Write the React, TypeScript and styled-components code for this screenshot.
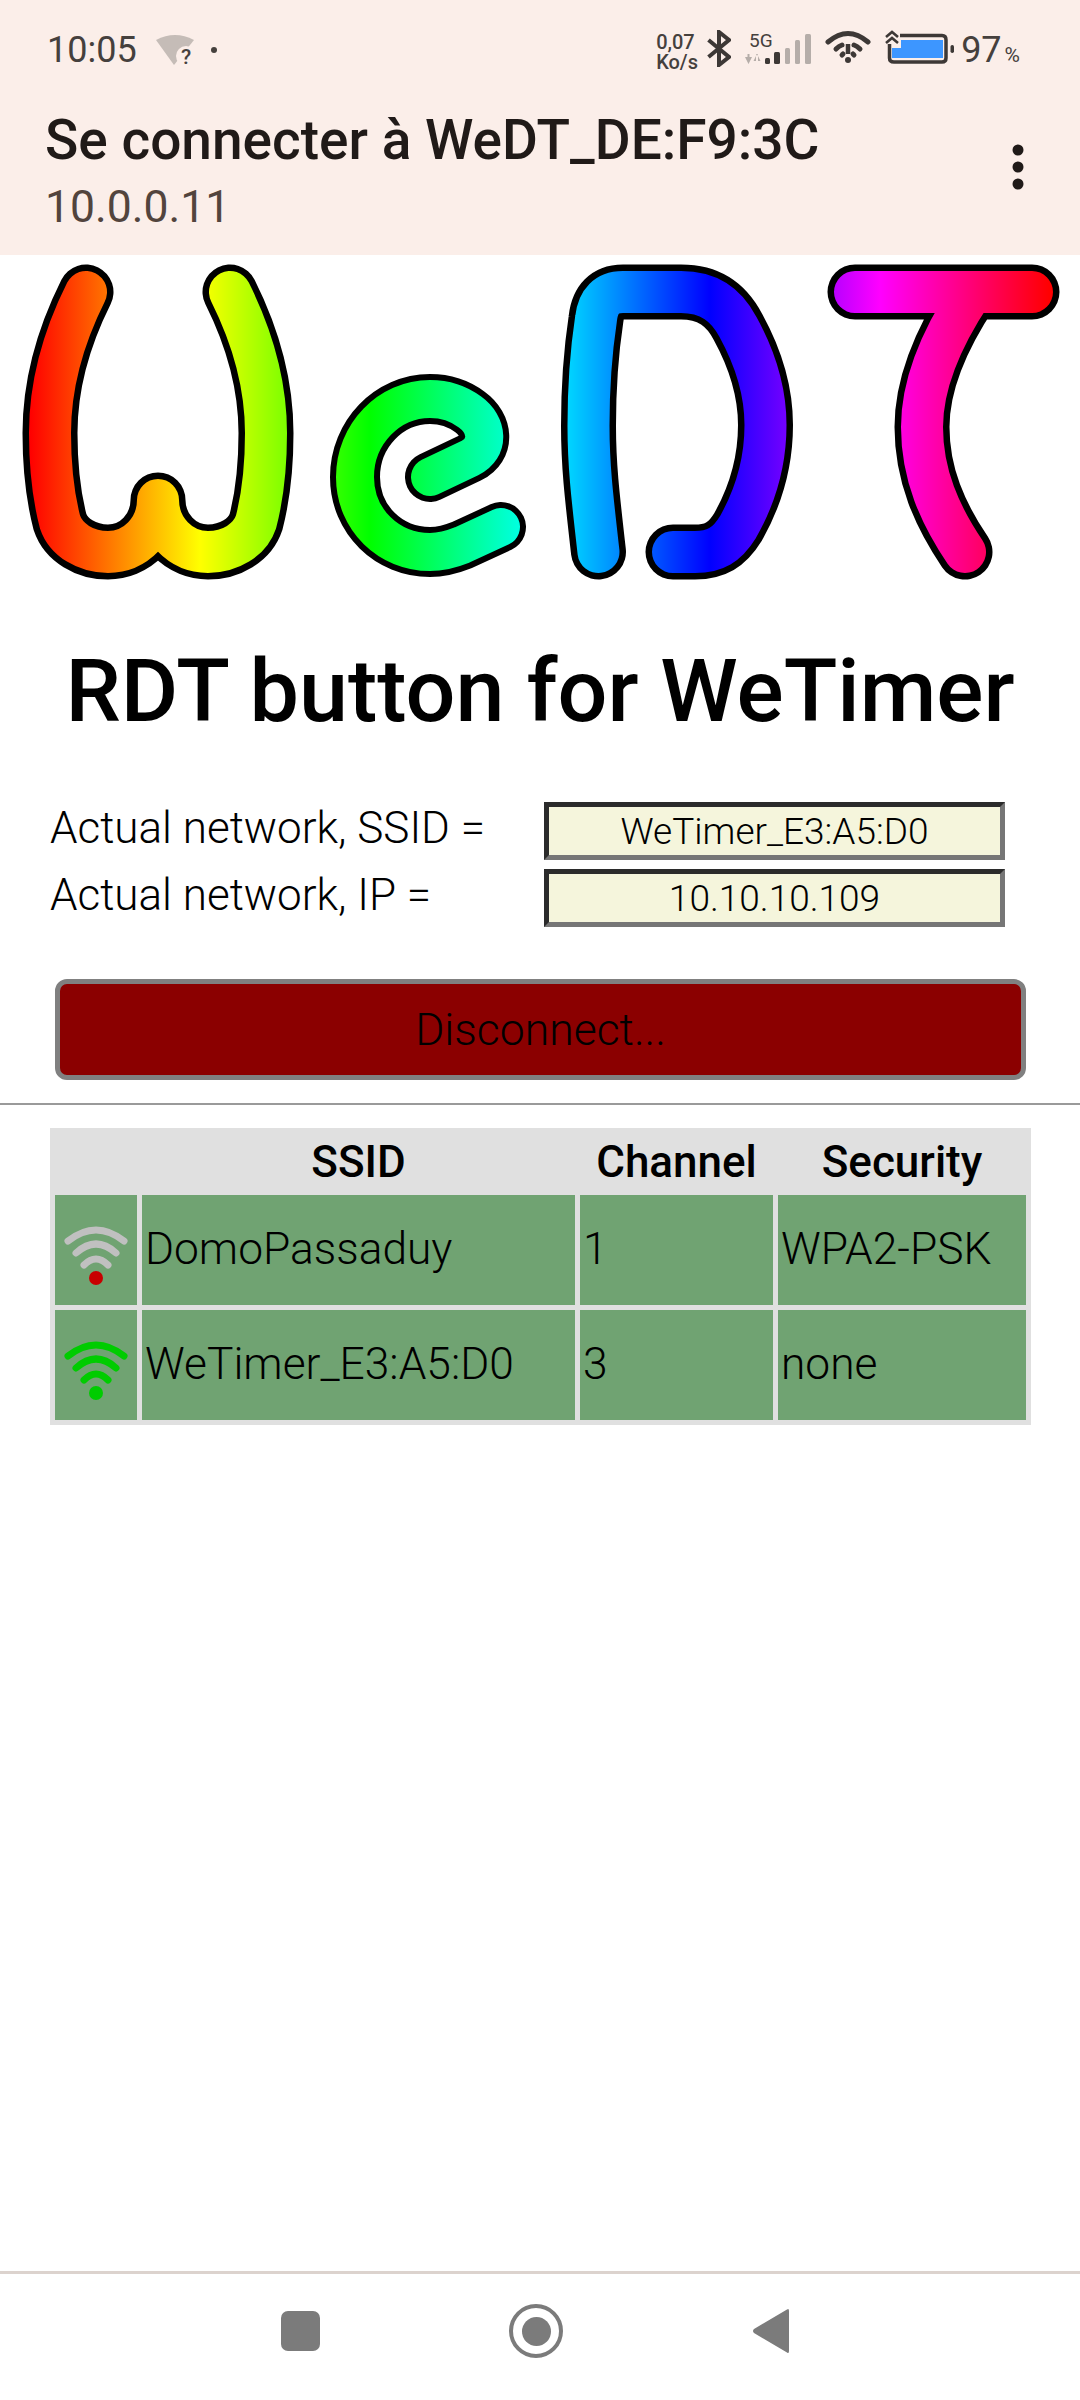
import React from 'react';
import styled, { createGlobalStyle } from 'styled-components';

const GlobalStyle = createGlobalStyle`
  html, body {
    margin: 0;
    padding: 0;
    background: #fff;
    font-family: Roboto, "Liberation Sans", sans-serif;
  }
`;

const Page = styled.div`
  display: flex;
  flex-direction: column;
  width: 1080px;
  height: 2400px;
  overflow: hidden;
`;

const AppHeader = styled.header`
  height: 255px;
  flex: none;
  background: #fbeee9;
`;

const StatusBar = styled.div`
  display: flex;
  align-items: center;
  height: 100px;
  padding: 0 60px 0 47px;
  color: #45403d;
  box-sizing: border-box;
`;

const Time = styled.span`
  font-size: 36px;
  line-height: 44px;
  margin-right: 19px;
`;

const NoticeDot = styled.span`
  width: 6px;
  height: 6px;
  border-radius: 50%;
  background: #45403d;
  margin-left: 17px;
`;

const StatusIcons = styled.div`
  display: flex;
  align-items: flex-start;
  gap: 13px;
  margin-left: auto;
  height: 40px;
`;

const Speed = styled.div`
  width: 38px;
  padding-top: 2px;
  font-size: 20px;
  line-height: 20px;
  font-weight: 500;
  white-space: nowrap;
`;

const Level = styled.div`
  margin-left: -6px;
  font-size: 36px;
  line-height: 40px;
  white-space: nowrap;
  & small {
    font-size: 21px;
    margin-left: 3px;
  }
`;

const TitleRow = styled.div`
  display: flex;
  align-items: flex-start;
  justify-content: space-between;
  padding: 8px 49px 0 45px;
`;

const Title = styled.h2`
  margin: 0;
  font-size: 55px;
  line-height: 64px;
  font-weight: 500;
  color: #201a18;
`;

const Subtitle = styled.div`
  font-size: 44.5px;
  line-height: 52px;
  margin-top: 9px;
  color: #52443d;
`;

const Kebab = styled.svg`
  width: 26px;
  height: 56px;
  margin-top: 34px;
`;

const Logo = styled.svg`
  display: block;
  flex: none;
  width: 1080px;
  height: 340px;
`;

const Heading = styled.h1`
  margin: 0;
  padding: 46px 0 0;
  height: 156px;
  box-sizing: border-box;
  text-align: center;
  font-size: 88px;
  line-height: 100px;
  font-weight: 500;
  color: #000;
`;

const NetworkInfo = styled.div`
  display: grid;
  grid-template-columns: 494px 461px;
  grid-row-gap: 9px;
  padding: 51px 0 0 50px;
  align-items: start;
`;

const InfoLabel = styled.label`
  font-size: 44px;
  line-height: 52px;
  font-weight: 300;
  color: #000;
  white-space: nowrap;
`;

const InfoValue = styled.input`
  width: 461px;
  height: 58px;
  box-sizing: border-box;
  border-width: 5px;
  border-style: solid;
  border-color: #2b2b2b #767676 #767676 #2b2b2b;
  padding: 0;
  background: #f5f5dc;
  text-align: center;
  font-family: inherit;
  font-size: 37px;
  font-weight: 300;
  color: #000;
  outline: none;
`;

const DisconnectButton = styled.button`
  display: block;
  width: 971px;
  height: 101px;
  margin: 52px 0 0 55px;
  box-sizing: border-box;
  border: 5px solid #808080;
  border-radius: 12px;
  background: #8b0000;
  font-family: inherit;
  font-size: 44.5px;
  font-weight: 300;
  color: #000;
`;

const Rule = styled.hr`
  margin: 23px 0 0;
  border: 0;
  height: 2px;
  background: #9a9a9a;
`;

const NetworkTable = styled.table`
  width: 981px;
  margin: 23px 0 0 50px;
  table-layout: fixed;
  border-collapse: separate;
  border-spacing: 5px;
  background: #e0e0e0;
  & th {
    height: 57px;
    padding: 0;
    font-size: 44px;
    font-weight: 500;
    color: #000;
    text-align: center;
  }
`;

const Cell = styled.td`
  height: 110px;
  padding: 0 0 3px 3px;
  box-sizing: border-box;
  background: #70a372;
  font-size: 44.3px;
  font-weight: 300;
  color: #000;
  white-space: nowrap;
`;

const IconCell = styled.td`
  height: 110px;
  padding: 0;
  background: #70a372;
  text-align: center;
  line-height: 0;
`;

const Spacer = styled.div`
  flex: 1;
`;

const NavBar = styled.nav`
  display: flex;
  align-items: center;
  height: 129px;
  flex: none;
  box-sizing: border-box;
  border-top: 3px solid #dcd3ce;
  padding: 0 0 12px 281px;
`;

const RecentsKey = styled.span`
  width: 39px;
  height: 40px;
  border-radius: 7px;
  background: #7b7b7b;
`;

const HomeKey = styled.span`
  display: flex;
  align-items: center;
  justify-content: center;
  width: 54px;
  height: 54px;
  margin-left: 189px;
  box-sizing: border-box;
  border: 4px solid #7b7b7b;
  border-radius: 50%;
  &::after {
    content: '';
    width: 29px;
    height: 29px;
    border-radius: 50%;
    background: #7b7b7b;
  }
`;

const BackKey = styled.svg`
  width: 37px;
  height: 46px;
  margin-left: 189px;
`;

const WifiQuestion = () => (
  <svg width="38" height="31" viewBox="0 0 38 31">
    <path d="M0 5 Q19 -5 38 5 L18 30 Z" fill="#c5bcb7" />
    <circle cx="30" cy="21" r="10" fill="#fbeee9" />
    <text x="30" y="29" fontFamily="Roboto" fontSize="21" fontWeight="500" textAnchor="middle" fill="#45403d">?</text>
  </svg>
);

const Bluetooth = () => (
  <svg width="24" height="37" viewBox="0 0 24 37">
    <path d="M1.500 10 L22 27 L12 35 L12 2 L22 10 L1.500 27" fill="none" stroke="#3d3836" strokeWidth="4" />
  </svg>
);

const Signal = () => (
  <svg width="68" height="40" viewBox="0 0 68 40">
    <text x="5" y="17" fontFamily="Roboto" fontSize="19" fill="#45403d">5G</text>
    <path d="M1 27 H3.500 V24 H5.500 V27 H8 L4.500 34 Z M9.500 31 H12 V24 H14 V31 H16.500 L13 24 Z" fill="#b5ada9" />
    <rect x="21" y="28" width="5" height="6" rx="1.5" fill="#3d3836" />
    <rect x="30" y="22" width="6" height="12" rx="1.5" fill="#3d3836" />
    <rect x="41" y="18" width="5" height="16" rx="1.5" fill="#b5ada9" />
    <rect x="51" y="10" width="5" height="24" rx="1.5" fill="#b5ada9" />
    <rect x="61" y="4" width="6" height="30" rx="1.5" fill="#b5ada9" />
  </svg>
);

const WifiAlert = () => (
  <svg width="46" height="36" viewBox="0 0 46 36">
    <g fill="none" stroke="#3d3836" strokeWidth="5" strokeLinecap="round">
      <path d="M3 12 Q23 -5 43 12" />
      <path d="M11 19 Q14 16 17 15" />
      <path d="M35 19 Q32 16 29 15" />
      <path d="M17 25 L18 24" />
      <path d="M29 25 L28 24" />
      <path d="M23 14 L23 24" strokeLinecap="butt" strokeWidth="4.5" />
    </g>
    <circle cx="23" cy="30" r="3" fill="#3d3836" />
  </svg>
);

const Battery = () => (
  <svg width="70" height="36" viewBox="0 0 70 36">
    <path d="M16 5.500 H58 Q62 5.500 62 10 V28 Q62 32 58 32 H10 Q5.500 32 5.500 28 V14" fill="none" stroke="#3d3836" strokeWidth="3.5" />
    <path d="M17 10 H59 V28 H8 V18 H17 Z" fill="#3d96ff" />
    <rect x="66.5" y="15" width="3.5" height="8" rx="1.7" fill="#3d3836" />
    <path d="M2 7 L8 2 L14 7 M2 13 L8 8 L14 13" fill="none" stroke="#3d3836" strokeWidth="2.6" />
  </svg>
);

const WifiLevel = ({ color, dot }: { color: string; dot: string }) => (
  <svg width="64" height="72" viewBox="0 -8 64 72">
    <g fill="none" stroke={color} strokeWidth="7" strokeLinecap="round">
      <path d="M4 19 Q32 -3 60 19" />
      <path d="M12 31 Q32 13 52 31" />
      <path d="M20 43 Q32 31 44 43" />
    </g>
    <circle cx="32" cy="56" r="7" fill={dot} />
  </svg>
);

const LETTERS = [
  {
    name: 'W',
    outer: 55,
    inner: 42,
    d: 'M86 292 C62 340 50 388 50 433 C50 465 53 495 60 522 C66 540 86 552 108 552 A50 52 0 0 0 158 500 A50 52 0 0 0 208 552 C230 552 250 540 256 522 C263 495 266 465 266 433 C266 388 254 340 230 292',
  },
  {
    name: 'e',
    outer: 50,
    inner: 38,
    d: 'M430 477 L470 458 C490 448 488 425 470 412 C458 403 445 399 430 399 C389 399 355 434 355 477 C355 520 389 552 430 552 C442 552 452 549 462 545 L501 527',
  },
  {
    name: 'D',
    outer: 55,
    inner: 42,
    d: 'M598.5 552 C592 495 588.5 465 588.5 426 C588.5 385 591 352 596 319 Q599 292 623 292 L681 292 C710 292 727 306 738 327 C755 358 765.5 390 765.5 425 C765.5 465 755 497 738 527 C727 545 715 552 695 552 L673 552',
  },
  {
    name: 'T',
    outer: 55,
    inner: 42,
    d: 'M855 292 L1032 292 M972 292 C940 340 922 385 922 427 C922 475 940 515 965 552',
  },
];

const WeDTLogo = () => (
  <Logo viewBox="0 255 1080 340">
    <defs>
      <linearGradient id="rainbow" gradientUnits="userSpaceOnUse" x1="30" y1="0" x2="1050" y2="0">
        <stop offset="0" stopColor="#ff0000" />
        <stop offset="0.1667" stopColor="#ffff00" />
        <stop offset="0.3333" stopColor="#00ff00" />
        <stop offset="0.5" stopColor="#00ffff" />
        <stop offset="0.6667" stopColor="#0000ff" />
        <stop offset="0.8333" stopColor="#ff00ff" />
        <stop offset="1" stopColor="#ff0000" />
      </linearGradient>
    </defs>
    <g fill="none" strokeLinecap="round" strokeLinejoin="round">
      {LETTERS.map(l => (
        <g key={l.name}>
          <path d={l.d} stroke="#000" strokeWidth={l.outer} />
          <path d={l.d} stroke="url(#rainbow)" strokeWidth={l.inner} />
        </g>
      ))}
    </g>
  </Logo>
);

const networks = [
  { ssid: 'DomoPassaduy', channel: '1', security: 'WPA2-PSK', color: '#c0c0c0', dot: '#c80000' },
  { ssid: 'WeTimer_E3:A5:D0', channel: '3', security: 'none', color: '#00cc00', dot: '#00cc00' },
];

const App: React.FunctionComponent = () => {
  return (
    <Page>
      <GlobalStyle />
      <AppHeader>
        <StatusBar>
          <Time>10:05</Time>
          <WifiQuestion />
          <NoticeDot />
          <StatusIcons>
            <Speed>
              0,07
              <br />
              Ko/s
            </Speed>
            <Bluetooth />
            <Signal />
            <WifiAlert />
            <Battery />
            <Level>
              97<small>%</small>
            </Level>
          </StatusIcons>
        </StatusBar>
        <TitleRow>
          <div>
            <Title>Se connecter à WeDT_DE:F9:3C</Title>
            <Subtitle>10.0.0.11</Subtitle>
          </div>
          <Kebab viewBox="0 0 26 56">
            <circle cx="13" cy="8" r="5.5" fill="#201a18" />
            <circle cx="13" cy="25" r="5.5" fill="#201a18" />
            <circle cx="13" cy="42" r="5.5" fill="#201a18" />
          </Kebab>
        </TitleRow>
      </AppHeader>

      <WeDTLogo />
      <Heading>RDT button for WeTimer</Heading>

      <NetworkInfo>
        <InfoLabel>Actual network, SSID =</InfoLabel>
        <InfoValue readOnly value="WeTimer_E3:A5:D0" />
        <InfoLabel>Actual network, IP =</InfoLabel>
        <InfoValue readOnly value="10.10.10.109" />
      </NetworkInfo>

      <DisconnectButton>Disconnect...</DisconnectButton>
      <Rule />

      <NetworkTable>
        <colgroup>
          <col width="82" />
          <col width="433" />
          <col width="193" />
          <col width="248" />
        </colgroup>
        <thead>
          <tr>
            <th />
            <th>SSID</th>
            <th>Channel</th>
            <th>Security</th>
          </tr>
        </thead>
        <tbody>
          {networks.map(n => (
            <tr key={n.ssid}>
              <IconCell>
                <WifiLevel color={n.color} dot={n.dot} />
              </IconCell>
              <Cell>{n.ssid}</Cell>
              <Cell>{n.channel}</Cell>
              <Cell>{n.security}</Cell>
            </tr>
          ))}
        </tbody>
      </NetworkTable>

      <Spacer />
      <NavBar>
        <RecentsKey />
        <HomeKey />
        <BackKey viewBox="0 0 37 46">
          <path d="M35 1.500 Q37 0 37 3 V43 Q37 46 35 44.500 L2 25 Q0 23 2 21 Z" fill="#7b7b7b" />
        </BackKey>
      </NavBar>
    </Page>
  );
};

export default App;
